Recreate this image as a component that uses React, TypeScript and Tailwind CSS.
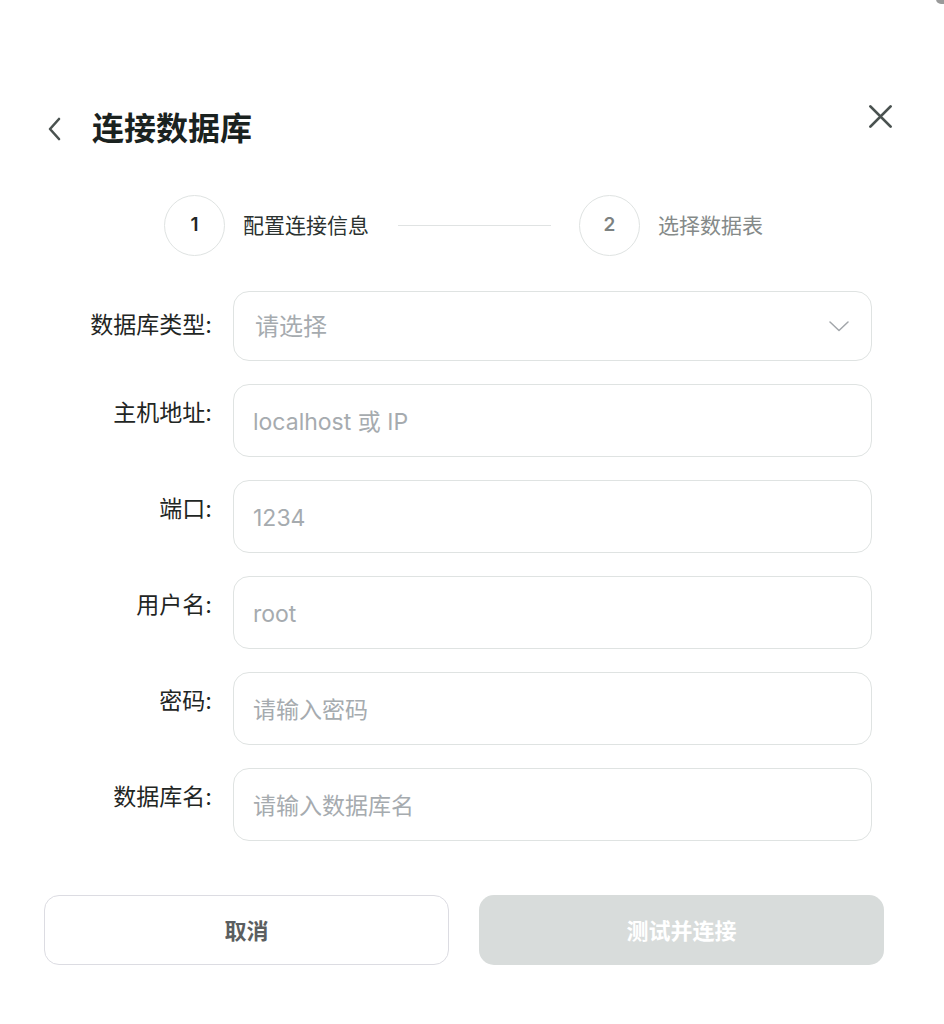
import React from 'react';

const font = { fontFamily: 'Inter, "Noto Sans CJK SC", "Noto Sans", sans-serif' };

interface Field {
  label: string;
  placeholder: string;
}

const fields: Field[] = [
  { label: '主机地址:', placeholder: 'localhost 或 IP' },
  { label: '端口:', placeholder: '1234' },
  { label: '用户名:', placeholder: 'root' },
  { label: '密码:', placeholder: '请输入密码' },
  { label: '数据库名:', placeholder: '请输入数据库名' },
];

const StepCircle: React.FC<{ n: number; active: boolean }> = ({ n, active }) => (
  <div
    className={`flex h-[61px] w-[61px] items-center justify-center rounded-full border-[1.5px] border-[#dfe3e2] text-[19px] font-semibold ${
      active ? 'text-[#1f2624]' : 'text-[#7d8281]'
    }`}
  >
    {n}
  </div>
);

const App: React.FC = () => {
  return (
    <div className="relative h-[1024px] w-[944px] overflow-hidden bg-white" style={font}>
      <div className="absolute right-[-6px] top-[-6px] h-[10px] w-[14px] rounded-full bg-[#9a9a9a]" />

      <button className="absolute left-[866px] top-[102px] flex h-[28px] w-[28px] items-center justify-center text-[#4a5250]">
        <svg width="27" height="27" viewBox="0 0 24 24" fill="none" stroke="currentColor" strokeWidth="2.5" strokeLinecap="round">
          <path d="M3 3 L21 21 M21 3 L3 21" />
        </svg>
      </button>

      <div className="ml-[44px] w-[840px] pt-[105px]">
        {/* header */}
        <div className="flex h-[48px] items-center">
          <svg className="ml-[3px]" width="14" height="24" viewBox="0 0 14 24" fill="none" stroke="#4a5250" strokeWidth="2.6" strokeLinecap="round" strokeLinejoin="round">
            <path d="M12 2 L3 12 L12 22" />
          </svg>
          <h1 className="ml-[31px] text-[32px] font-bold leading-none text-[#1a2220]">连接数据库</h1>
        </div>

        {/* stepper */}
        <div className="ml-[120px] mt-[42px] flex items-center">
          <StepCircle n={1} active />
          <span className="ml-[18px] text-[21px] text-[#2b3230]">配置连接信息</span>
          <div className="ml-[29px] h-[1.5px] w-[153px] bg-[#e0e3e3]" />
          <div className="ml-[28px]">
            <StepCircle n={2} active={false} />
          </div>
          <span className="ml-[18px] text-[21px] text-[#858a89]">选择数据表</span>
        </div>

        {/* form */}
        <div className="mt-[35px] flex flex-col gap-[23px] pr-[12px]">
          <div className="flex items-start gap-[21px]">
            <label className="w-[168px] pt-[17px] text-right text-[23px] leading-[34px] text-[#1f2624]">数据库类型:</label>
            <div className="flex h-[70px] flex-1 items-center justify-between rounded-[16px] border-[1.5px] border-[#dfe3e2] pl-[21px] pr-[22px]">
              <span className="pt-[1px] text-[24px] text-[#a6abaf]">请选择</span>
              <svg width="20" height="11" viewBox="0 0 20 11" fill="none" stroke="#a2a6aa" strokeWidth="1.5" strokeLinecap="round" strokeLinejoin="round">
                <path d="M1 1 L10 9.5 L19 1" />
              </svg>
            </div>
          </div>

          {fields.map((f) => (
            <div key={f.label} className="flex items-start gap-[21px]">
              <label className="w-[168px] pt-[12px] text-right text-[23px] leading-[34px] text-[#1f2624]">{f.label}</label>
              <input
                placeholder={f.placeholder}
                className="h-[73px] flex-1 rounded-[16px] border-[1.5px] border-[#dfe3e2] px-[19px] pt-[2px] text-[23px] outline-none placeholder:text-[#a6abaf]"
              />
            </div>
          ))}
        </div>

        {/* buttons */}
        <div className="mt-[54px] grid grid-cols-2 gap-[30px]">
          <button className="h-[70px] rounded-[15px] border-[1.5px] border-[#dcdce2] bg-white pt-[2px] text-[22px] font-bold text-[#5b5e60]">
            取消
          </button>
          <button className="h-[70px] rounded-[15px] bg-[#d8dcdb] pt-[2px] text-[22px] font-bold text-white">
            测试并连接
          </button>
        </div>
      </div>
    </div>
  );
};

export default App;
